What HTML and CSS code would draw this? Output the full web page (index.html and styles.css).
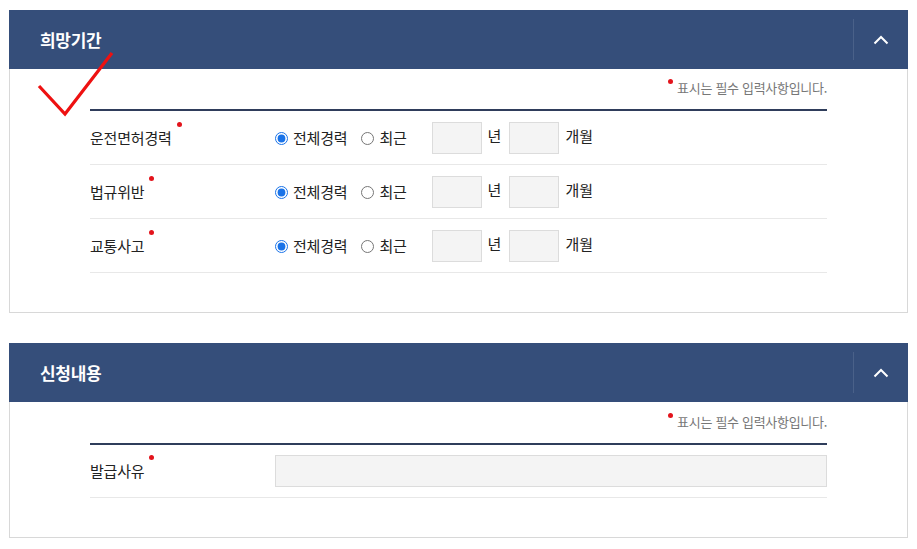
FILE: index.html
```html
<!DOCTYPE html>
<html lang="ko">
<head>
<meta charset="utf-8">
<link rel="stylesheet" href="styles.css">
</head>
<body>
<div class="page">
  <section class="panel">
    <header class="panel-head">
      <h2 class="panel-title">희망기간</h2>
      <button class="toggle" type="button" aria-label="접기">
        <svg width="16" height="10" viewBox="0 0 16 10"><polyline points="1.5,8.5 8,2 14.5,8.5" fill="none" stroke="#fff" stroke-width="2"/></svg>
      </button>
    </header>
    <div class="panel-body">
      <p class="note"><span class="dot"></span>표시는 필수 입력사항입니다.</p>
      <div class="form">
        <div class="row">
          <div class="label">운전면허경력<span class="req"></span></div>
          <div class="field">
            <label class="opt"><input type="radio" name="a" checked>전체경력</label>
            <label class="opt opt2"><input type="radio" name="a">최근</label>
            <span class="box"></span><span class="unit">년</span>
            <span class="box"></span><span class="unit">개월</span>
          </div>
        </div>
        <div class="row">
          <div class="label">법규위반<span class="req"></span></div>
          <div class="field">
            <label class="opt"><input type="radio" name="b" checked>전체경력</label>
            <label class="opt opt2"><input type="radio" name="b">최근</label>
            <span class="box"></span><span class="unit">년</span>
            <span class="box"></span><span class="unit">개월</span>
          </div>
        </div>
        <div class="row">
          <div class="label">교통사고<span class="req"></span></div>
          <div class="field">
            <label class="opt"><input type="radio" name="c" checked>전체경력</label>
            <label class="opt opt2"><input type="radio" name="c">최근</label>
            <span class="box"></span><span class="unit">년</span>
            <span class="box"></span><span class="unit">개월</span>
          </div>
        </div>
      </div>
    </div>
    <svg class="check" width="90" height="72" viewBox="0 0 90 72"><polyline points="2,35 28,63 75,2" fill="none" stroke="#ee1111" stroke-width="3.2"/></svg>
  </section>

  <section class="panel">
    <header class="panel-head">
      <h2 class="panel-title">신청내용</h2>
      <button class="toggle" type="button" aria-label="접기">
        <svg width="16" height="10" viewBox="0 0 16 10"><polyline points="1.5,8.5 8,2 14.5,8.5" fill="none" stroke="#fff" stroke-width="2"/></svg>
      </button>
    </header>
    <div class="panel-body panel-body-2">
      <p class="note"><span class="dot"></span>표시는 필수 입력사항입니다.</p>
      <div class="form">
        <div class="row row-last">
          <div class="label">발급사유<span class="req"></span></div>
          <div class="field"><span class="wide"></span></div>
        </div>
      </div>
    </div>
  </section>
</div>
</body>
</html>
```

FILE: styles.css
```css
* { box-sizing: border-box; }
html, body { margin: 0; padding: 0; background: #fff; }
body {
  font-family: "Noto Sans CJK KR", "Noto Sans", sans-serif;
  color: #222;
}
.page {
  padding: 10px 9px 0;
  display: flex;
  flex-direction: column;
  gap: 30px;
}
.panel { position: relative; }
.panel-head {
  height: 59px;
  background: #354e7a;
  display: flex;
  align-items: center;
  justify-content: space-between;
}
.panel-title {
  margin: 0 0 0 31px;
  color: #fff;
  font-size: 17px;
  font-weight: 700;
  letter-spacing: -0.3px;
}
.toggle {
  width: 55px;
  height: 41px;
  border: 0;
  border-left: 1px solid #4a6189;
  background: transparent;
  padding: 0;
  display: flex;
  align-items: center;
  justify-content: center;
  cursor: pointer;
}
.panel-body {
  border: 1px solid #d8d8d8;
  border-top: 0;
  padding: 10px 80px 39px;
}
.panel-body-2 { padding-top: 11px; }
.note {
  margin: 0 0 12px;
  text-align: right;
  font-size: 13px;
  line-height: 18px;
  color: #777;
  letter-spacing: -0.3px;
}
.dot {
  display: inline-block;
  width: 5px;
  height: 5px;
  border-radius: 50%;
  background: #e3141c;
  vertical-align: top;
  margin: 0 4px 0 0;
}
.form { border-top: 2px solid #2f3d5b; }
.row {
  height: 54px;
  border-bottom: 1px solid #e8e8e8;
  display: flex;
  align-items: center;
}
.row-last { height: 53px; }
.label {
  width: 185px;
  flex: none;
  font-size: 15px;
  line-height: 20px;
  letter-spacing: -0.2px;
}
.req {
  display: inline-block;
  width: 5px;
  height: 5px;
  border-radius: 50%;
  background: #e3141c;
  vertical-align: top;
  margin: -6px 0 0 5px;
}
.field {
  flex: 1;
  display: flex;
  align-items: center;
  font-size: 15px;
}
.opt {
  display: inline-flex;
  align-items: center;
  line-height: 20px;
  letter-spacing: -0.2px;
}
.opt input {
  margin: 2px 5px 0 0;
  width: 13px;
  height: 13px;
  accent-color: #1a73e8;
}
.opt2 { margin-left: 14px; }
.box {
  width: 50px;
  height: 32px;
  background: #f4f4f4;
  border: 1px solid #dcdcdc;
  margin-right: 6px;
}
.opt2 + .box { margin-left: 25px; }
.unit { margin-right: 8px; line-height: 20px; margin-top: -4px; }
.wide {
  flex: 1;
  height: 32px;
  background: #f4f4f4;
  border: 1px solid #dcdcdc;
}
.check {
  position: absolute;
  left: 28px;
  top: 41px;
}
```
